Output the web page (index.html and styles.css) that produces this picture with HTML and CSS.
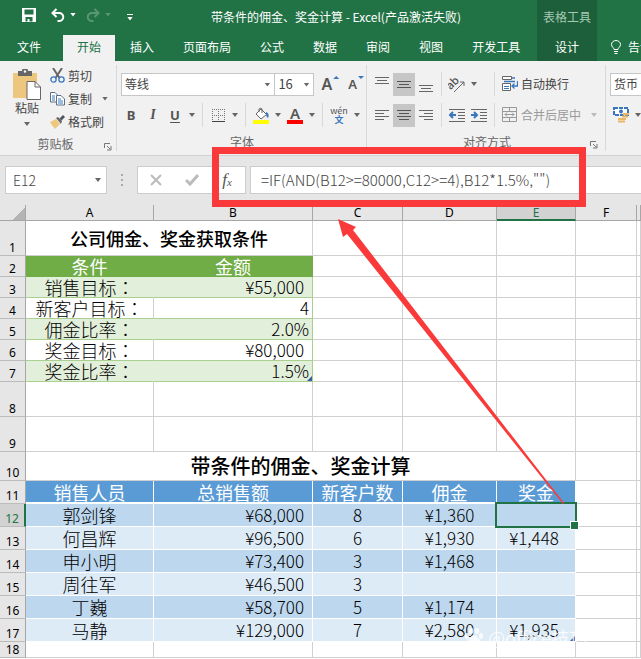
FILE: index.html
```html
<!DOCTYPE html>
<html lang="zh-Hans">
<head>
    <meta charset="UTF-8">
    <title>带条件的佣金、奖金计算 - Excel</title>
    <link rel="stylesheet" href="styles.css">
</head>
<body>
    <header>
        <div class="title-row">
            <div class="title-left">
                <div class="quick">
                    <button class="plain" aria-label="保存">
                        <svg width="14" height="14" viewBox="0 0 14 14"><path d="M0 0h14v14H0z" fill="#fff"/><path d="M2.500 1.500h9v5h-9zM3.500 9h7v4.500H7.500v-2.500h-2v2.500h-2z" fill="#217346"/></svg>
                    </button>
                    <button class="plain undo" aria-label="撤销">
                        <svg width="14" height="14" viewBox="0 0 14 14"><path d="M1.500 5h6.500a4 4 0 0 1 .500 8H6.500M5.500 1L1.500 5l4 4" fill="none" stroke="#fff" stroke-width="2"/></svg>
                        <i class="arrow"></i>
                    </button>
                    <button class="plain redo" aria-label="恢复">
                        <svg width="14" height="14" viewBox="0 0 14 14"><path d="M12.500 5H6a4 4 0 0 0-.500 8h2M8.500 1l4 4-4 4" fill="none" stroke="#fff" stroke-width="2"/></svg>
                        <i class="arrow"></i>
                    </button>
                    <button class="plain more" aria-label="自定义"><i class="bar"></i><i class="arrow"></i></button>
                </div>
                <div class="doc-title">带条件的佣金、奖金计算 - Excel(产品激活失败)</div>
            </div>
            <div class="tool-title">表格工具</div>
        </div>
        <div class="tab-row">
            <nav class="tabs">
                <button class="tab file">文件</button>
                <button class="tab active">开始</button>
                <button class="tab">插入</button>
                <button class="tab">页面布局</button>
                <button class="tab">公式</button>
                <button class="tab">数据</button>
                <button class="tab">审阅</button>
                <button class="tab">视图</button>
                <button class="tab">开发工具</button>
            </nav>
            <button class="tab design">设计</button>
            <button class="tab tell">
                <svg width="10" height="14" viewBox="0 0 10 14"><path d="M3 9.500C3 7.500.500 7 .500 4.500a4.500 4 0 0 1 9 0C9.500 7 7 7.500 7 9.500zM3 11.500h4M3.500 13.500h3" fill="none" stroke="#fff"/></svg>
                告诉我
            </button>
        </div>
    </header>

    <div class="ribbon">
        <section class="group clipboard">
            <div class="clip-body">
                <button class="plain paste">
                    <svg width="30" height="31" viewBox="0 0 30 31"><path d="M1 4h24v25H1z" fill="#eec77f"/><path d="M6 2h4a3 3 0 0 1 6 0h4v5H6z" fill="#666"/><circle cx="13" cy="2.500" r="1.200" fill="#fff"/><path d="M15 12.500h8l5.500 5.500v12.500H15z" fill="#fff" stroke="#666"/><path d="M23 12.500V18h5.500" fill="none" stroke="#666"/></svg>
                    <span>粘贴</span>
                    <i class="arrow"></i>
                </button>
                <div class="clip-list">
                    <button class="plain">
                        <svg width="15" height="15" viewBox="0 0 15 15"><path d="M3 0l6.500 10M12 0L5.500 10" stroke="#666" stroke-width="2" fill="none"/><circle cx="3.500" cy="11.500" r="2.600" fill="none" stroke="#3a76bd" stroke-width="1.300"/><circle cx="11.500" cy="11.500" r="2.600" fill="none" stroke="#3a76bd" stroke-width="1.300"/></svg>
                        剪切
                    </button>
                    <button class="plain">
                        <svg width="15" height="15" viewBox="0 0 15 15"><path d="M.500 1.500H5L7.500 4v7h-7z" fill="#fff" stroke="#5b6f86"/><path d="M2 5h3M2 7h3M2 9h3" stroke="#3a76bd"/><path d="M6.500 4.500H11L14.500 8v6h-8z" fill="#fff" stroke="#5b6f86"/><path d="M8 8h3M8 10h5M8 12h5" stroke="#3a76bd"/></svg>
                        复制
                        <i class="arrow copy-arrow"></i>
                    </button>
                    <button class="plain">
                        <svg width="15" height="15" viewBox="0 0 15 15"><path d="M0 8l6-3 4 5-5 5c-1-2-3-3-5-7z" fill="#eec77f"/><path d="M6 4l2-1 4 4-1 3z" fill="#666"/><path d="M9.500 4.500L13 1l2 2-3.500 3.500z" fill="#4d5663"/></svg>
                        格式刷
                    </button>
                </div>
            </div>
            <div class="group-label">剪贴板<svg class="launcher" width="8" height="8" viewBox="0 0 8 8"><path d="M.500 5V.500H6M3 3l3.500 3.500M7 3v4H3" fill="none" stroke="#777"/></svg></div>
        </section>

        <section class="group font">
            <div class="tool-row">
                <span class="combo family"><select aria-label="字体"><option>等线</option></select></span>
                <span class="combo size"><select aria-label="字号"><option>16</option></select></span>
                <button class="plain grow" aria-label="增大字号">A<i></i></button>
                <button class="plain shrink" aria-label="减小字号">A<i></i></button>
            </div>
            <div class="tool-row">
                <button class="tool bold">B</button>
                <button class="tool italic">I</button>
                <button class="tool underline">U</button>
                <i class="arrow"></i><i class="sep"></i>
                <button class="tool" aria-label="边框">
                    <svg width="13" height="13" viewBox="0 0 13 13"><path d="M0 .500h13M0 6.500h13M.500 0v12M6.500 0v12M12.500 0v12" stroke="#777" stroke-dasharray="1 1"/><path d="M0 12.500h13" stroke="#444"/></svg>
                </button>
                <i class="arrow"></i><i class="sep"></i>
                <button class="tool" aria-label="填充颜色">
                    <svg width="17" height="17" viewBox="0 0 17 17"><path d="M3 7l5-5 5.500 5.500L8 12z" fill="#fff" stroke="#666"/><path d="M6 5V2a2 2 0 0 1 3 0v4" fill="none" stroke="#666"/><path d="M13 5c3 1 3 4 2 6-2-1-2-3-2-6z" fill="#3a76bd"/><path d="M0 13h16v4H0z" fill="#ff0"/></svg>
                </button>
                <i class="arrow"></i>
                <button class="tool fore"><span>A</span></button>
                <i class="arrow"></i><i class="sep"></i>
                <button class="tool pinyin"><span>wén</span><b>文</b></button>
                <i class="arrow"></i>
            </div>
            <div class="group-label">字体</div>
        </section>

        <section class="group align">
            <div class="tool-row">
                <button class="tool" aria-label="顶端对齐"><svg width="14" height="16" viewBox="0 0 14 16"><path d="M0 1.500h14M2 4.500h10M0 7.500h14" stroke="#666"/></svg></button>
                <button class="tool on" aria-label="垂直居中"><svg width="14" height="16" viewBox="0 0 14 16"><path d="M0 5.500h14M2 8.500h10M0 11.500h14" stroke="#555"/></svg></button>
                <button class="tool" aria-label="底端对齐"><svg width="14" height="16" viewBox="0 0 14 16"><path d="M0 9.500h14M2 12.500h10M0 15.500h14" stroke="#666"/></svg></button>
                <i class="sep"></i>
                <div class="pair">
                    <button class="tool" aria-label="方向"><svg width="18" height="17" viewBox="0 0 18 17"><text class="ab" x="-1" y="10" transform="rotate(-45 6 8)">ab</text><path d="M6 16L16 6M12 6h4v4" fill="none" stroke="#666"/></svg></button>
                    <i class="arrow"></i>
                </div>
                <i class="sep"></i>
                <button class="plain wide"><svg width="16" height="16" viewBox="0 0 16 16"><path d="M.500 .500h9v3h-9zM.500 7.500h8v7h-8z" fill="#fff" stroke="#666"/><path d="M2 10.500h5M2 12.500h5" stroke="#3a76bd"/><path d="M10 2h3M2 5.500h11M15.500 5v5h-5M12.500 7.500l-2.500 2.500 2.500 2.500" fill="none" stroke="#3a76bd" stroke-width="1.300"/></svg>自动换行</button>
            </div>
            <div class="tool-row">
                <button class="tool" aria-label="左对齐"><svg width="14" height="12" viewBox="0 0 14 12"><path d="M0 1.500h14M0 4.500h9M0 7.500h14M0 10.500h9" stroke="#666"/></svg></button>
                <button class="tool on" aria-label="居中"><svg width="14" height="12" viewBox="0 0 14 12"><path d="M0 1.500h14M2 4.500h10M0 7.500h14M2 10.500h10" stroke="#555"/></svg></button>
                <button class="tool" aria-label="右对齐"><svg width="14" height="12" viewBox="0 0 14 12"><path d="M0 1.500h14M5 4.500h9M0 7.500h14M5 10.500h9" stroke="#666"/></svg></button>
                <i class="sep"></i>
                <div class="pair">
                    <button class="tool" aria-label="减少缩进"><svg width="16" height="14" viewBox="0 0 16 14"><path d="M0 1.500h16M9 4.500h7M9 7.500h7M9 10.500h7M0 13.500h16" stroke="#666"/><path d="M1 7h6M4 4L1 7l3 3" fill="none" stroke="#3a76bd" stroke-width="2"/></svg></button>
                    <button class="tool" aria-label="增加缩进"><svg width="16" height="14" viewBox="0 0 16 14"><path d="M0 1.500h16M9 4.500h7M9 7.500h7M9 10.500h7M0 13.500h16" stroke="#666"/><path d="M0 7h6M3 4l3 3-3 3" fill="none" stroke="#3a76bd" stroke-width="2"/></svg></button>
                </div>
                <i class="sep"></i>
                <button class="plain wide merge"><svg width="16" height="16" viewBox="0 0 16 16"><path d="M.500 .500h14v14H.500zM.500 4.500h14M.500 10.500h14M7.500 .500v4M7.500 10.500v4M3 7.500h9M5 5.500l-2 2 2 2M10 5.500l2 2-2 2" fill="none" stroke="#999"/></svg>合并后居中</button>
                <i class="arrow faint"></i>
            </div>
            <div class="group-label">对齐方式<svg class="launcher" width="8" height="8" viewBox="0 0 8 8"><path d="M.500 5V.500H6M3 3l3.500 3.500M7 3v4H3" fill="none" stroke="#777"/></svg></div>
        </section>

        <section class="group number">
            <div class="tool-row">
                <span class="combo format"><select aria-label="数字格式"><option>货币</option></select></span>
            </div>
            <div class="tool-row">
                <button class="tool" aria-label="会计格式"><svg width="17" height="16" viewBox="0 0 17 16"><path d="M1 1h14v7H1z" fill="#fff" stroke="#3a76bd" stroke-width="2" stroke-dasharray="4 1"/><circle cx="8" cy="4.500" r="2" fill="#3a76bd"/><path d="M10 7h6M9 9.500h6M5 12h8M5 14.500h7" stroke="#eab765" stroke-width="2"/></svg></button>
                <i class="arrow"></i>
            </div>
        </section>
    </div>

    <div class="formula-bar">
        <div class="name-box"><input type="text" value="E12" aria-label="名称框"><i class="arrow"></i></div>
        <div class="dots"><i></i><i></i><i></i></div>
        <div class="edit-buttons">
            <button class="plain" aria-label="取消"><svg width="12" height="12" viewBox="0 0 12 12"><path d="M1 1l10 10M11 1L1 11" stroke="#bbb" stroke-width="2"/></svg></button>
            <button class="plain" aria-label="输入"><svg width="14" height="12" viewBox="0 0 14 12"><path d="M1 6l4 4 8-9" fill="none" stroke="#bbb" stroke-width="3"/></svg></button>
            <button class="plain fx" aria-label="插入函数">f<small>x</small></button>
        </div>
        <input class="formula" type="text" aria-label="编辑栏" value='=IF(AND(B12&gt;=80000,C12&gt;=4),B12*1.5%,"")'>
    </div>

    <table class="sheet">
        <colgroup>
            <col class="col-head"><col class="col-a"><col class="col-b"><col class="col-c"><col class="col-d"><col class="col-e"><col class="col-f"><col>
        </colgroup>
        <thead>
            <tr><th class="corner"></th><th>A</th><th>B</th><th>C</th><th>D</th><th class="picked">E</th><th>F</th><th></th></tr>
        </thead>
        <tbody>
            <tr class="tall"><th>1</th><td colspan="2" class="title">公司佣金、奖金获取条件</td><td></td><td></td><td></td><td></td><td></td></tr>
            <tr class="green-head"><th>2</th><td>条件</td><td>金额</td><td></td><td></td><td></td><td></td><td></td></tr>
            <tr class="green band"><th>3</th><td>销售目标<span class="colon" lang="zh-Hant">：</span></td><td class="money">¥55,000</td><td></td><td></td><td></td><td></td><td></td></tr>
            <tr class="green"><th>4</th><td>新客户目标<span class="colon" lang="zh-Hant">：</span></td><td class="value">4</td><td></td><td></td><td></td><td></td><td></td></tr>
            <tr class="green band"><th>5</th><td>佣金比率<span class="colon" lang="zh-Hant">：</span></td><td class="value">2.0%</td><td></td><td></td><td></td><td></td><td></td></tr>
            <tr class="green"><th>6</th><td>奖金目标<span class="colon" lang="zh-Hant">：</span></td><td class="money">¥80,000</td><td></td><td></td><td></td><td></td><td></td></tr>
            <tr class="green band"><th>7</th><td>奖金比率<span class="colon" lang="zh-Hant">：</span></td><td class="value table-end">1.5%</td><td></td><td></td><td></td><td></td><td></td></tr>
            <tr class="tall"><th>8</th><td></td><td></td><td></td><td></td><td></td><td></td><td></td></tr>
            <tr class="tall"><th>9</th><td></td><td></td><td></td><td></td><td></td><td></td><td></td></tr>
            <tr class="caption"><th>10</th><td colspan="5" class="title">带条件的佣金、奖金计算</td><td></td><td></td></tr>
            <tr class="blue-head"><th>11</th><td>销售人员</td><td>总销售额</td><td>新客户数</td><td>佣金</td><td>奖金</td><td></td><td></td></tr>
            <tr class="blue dark"><th class="picked">12</th><td>郭剑锋</td><td class="money">¥68,000</td><td class="num">8</td><td class="num">¥1,360</td><td class="selected"></td><td></td><td></td></tr>
            <tr class="blue"><th>13</th><td>何昌辉</td><td class="money">¥96,500</td><td class="num">6</td><td class="num">¥1,930</td><td class="num bonus">¥1,448</td><td></td><td></td></tr>
            <tr class="blue dark"><th>14</th><td>申小明</td><td class="money">¥73,400</td><td class="num">3</td><td class="num">¥1,468</td><td></td><td></td><td></td></tr>
            <tr class="blue"><th>15</th><td>周往军</td><td class="money">¥46,500</td><td class="num">3</td><td></td><td></td><td></td><td></td></tr>
            <tr class="blue dark"><th>16</th><td>丁巍</td><td class="money">¥58,700</td><td class="num">5</td><td class="num">¥1,174</td><td></td><td></td><td></td></tr>
            <tr class="blue"><th>17</th><td>马静</td><td class="money">¥129,000</td><td class="num">7</td><td class="num">¥2,580</td><td class="num bonus table-end">¥1,935</td><td></td><td></td></tr>
            <tr class="last"><th>18</th><td></td><td></td><td></td><td></td><td></td><td></td><td></td></tr>
        </tbody>
    </table>

    <!-- annotations over the sheet -->
    <div class="red-box"></div>
    <svg class="red-arrow" width="228" height="286" viewBox="0 0 228 286"><path d="M0 0l18 8-3 3L226 284l-1 1L9 15l-4 3z" fill="#fa3a3a"/></svg>
    <div class="watermark">
        <svg width="20" height="20" viewBox="0 0 20 20" fill="#fff"><ellipse cx="3" cy="9" rx="2.200" ry="3"/><ellipse cx="7.500" cy="4" rx="2.200" ry="3"/><ellipse cx="13" cy="4" rx="2.200" ry="3"/><ellipse cx="17" cy="9" rx="2.200" ry="3"/><path d="M10 8c3 0 4 3 6 5s1 6-2 6-3-1-4-1-2 1-4 1-4-4-2-6 3-5 6-5z"/></svg>
        <span>@office技巧</span>
    </div>
</body>
</html>
```

FILE: styles.css
```css
* {
    box-sizing: border-box;
}

body {
    position: relative;
    margin: 0;
    overflow: hidden;
    background: #fff;
    color: #444;
    font-family: "Noto Sans CJK SC", sans-serif;
    font-size: 12px;
    line-height: 16px;
}

button, input, select {
    margin: 0;
    padding: 0;
    border: 0;
    background: none;
    color: inherit;
    font: inherit;
}

.plain {
    display: flex;
    align-items: center;
    white-space: nowrap;
}

.arrow {
    flex: none;
    width: 12px;
    height: 4px;
    background: #666;
    clip-path: polygon(3px 0, 9px 0, 6px 4px);
}

.arrow.faint {
    margin-left: 7px;
    background: #bbb;
}

/* header */
header {
    background: #217346;
    color: #fff;
}

.title-row, .tab-row {
    display: grid;
    grid-template-columns: 537px 60px 1fr;
}

.title-row {
    height: 35px;
}

.title-left {
    display: flex;
    align-items: center;
}

.doc-title {
    padding-bottom: 2px;
}

.quick {
    display: flex;
    align-items: center;
    width: 211px;
    padding: 0 0 6px 22px;
}

.quick .arrow {
    margin-left: 2px;
    background: #fff;
}

.undo {
    margin-left: 15px;
}

.redo {
    margin-left: 7px;
    opacity: 0.25;
}

.more {
    flex-direction: column;
    gap: 2px;
    margin: 5px 0 0 10px;
}

.bar {
    width: 6px;
    height: 1px;
    background: #fff;
}

.quick .more .arrow {
    margin: 0;
}

.tool-title {
    padding-top: 9px;
    background: #1c5f3a;
    color: #a5c9b3;
    text-align: center;
}

.tabs {
    display: flex;
    gap: 1px;
}

.tab {
    height: 26px;
    padding: 0 14px 2px;
    color: #fff;
    white-space: nowrap;
}

.tab.file {
    padding: 0 21px 2px 17px;
}

.tab.active {
    background: #f1f1f1;
    color: #217346;
}

.tab.design {
    padding: 0 0 2px;
    background: #1c5f3a;
}

.tab.tell {
    display: flex;
    align-items: center;
    gap: 7px;
    overflow: hidden;
}

.tab.tell svg {
    flex: none;
}

/* ribbon */
.ribbon {
    display: flex;
    height: 95px;
    border-bottom: 1px solid #d2d2d2;
    background: #f1f1f1;
}

.group {
    position: relative;
    flex: none;
    padding: 11px 3px 0;
}

.group::after {
    content: "";
    position: absolute;
    top: 4px;
    right: 0;
    width: 1px;
    height: 86px;
    background: #d8d8d8;
}

.group.number::after {
    display: none;
}

.clipboard {
    width: 117px;
    padding: 3px 0 0 12px;
}

.font {
    width: 250px;
}

.align {
    width: 239px;
    padding-left: 4px;
}

.number {
    flex: 1;
    overflow: hidden;
    padding-left: 4px;
}

.clip-body {
    display: flex;
    gap: 8px;
    height: 70px;
}

.paste {
    flex-direction: column;
    width: 30px;
    padding-top: 5px;
}

.paste .arrow {
    margin-top: 6px;
}

.clip-list .plain {
    gap: 3px;
    height: 23px;
}

.copy-arrow {
    margin-left: 4px;
}

.group-label {
    position: relative;
    margin-top: 2px;
    color: #666;
    text-align: center;
}

.clipboard .group-label {
    padding-right: 18px;
}

.launcher {
    position: absolute;
    right: 5px;
    top: 7px;
}

.tool-row {
    display: flex;
    align-items: center;
    height: 24px;
    margin-bottom: 7px;
}

.tool-row + .group-label {
    margin-top: 0;
}

.tool {
    display: flex;
    flex: none;
    align-items: center;
    justify-content: center;
    width: 22px;
    height: 23px;
    color: #555;
}

.tool.on {
    background: #c6c6c6;
}

.sep {
    flex: none;
    width: 1px;
    height: 24px;
    margin: 0 4px;
    background: #d8d8d8;
}

.combo {
    position: relative;
    height: 23px;
    border: 1px solid #c6c6c6;
    background: #fff;
}

.combo::after {
    content: "";
    position: absolute;
    top: 9px;
    right: 4px;
    width: 6px;
    height: 4px;
    background: #666;
    clip-path: polygon(0 0, 6px 0, 3px 4px);
}

.combo select {
    appearance: none;
    width: 100%;
    height: 21px;
    padding-left: 3px;
}

.family {
    width: 158px;
    margin-left: 1px;
}

.size {
    width: 40px;
    border-left: 0;
}

.size select {
    font-size: 13px;
}

.format {
    flex: none;
    width: 90px;
}

.grow, .shrink {
    gap: 1px;
    margin-left: 7px;
    color: #555;
    font-family: "Noto Sans", sans-serif;
    font-size: 16px;
    font-weight: 600;
}

.shrink {
    margin-left: 9px;
    font-size: 13px;
}

.grow i, .shrink i {
    width: 6px;
    height: 3px;
    margin-bottom: 13px;
    background: #3a76bd;
    clip-path: polygon(0 3px, 3px 0, 6px 3px);
}

.shrink i {
    clip-path: polygon(0 0, 3px 3px, 6px 0);
}

.bold, .italic, .underline {
    font-family: "Noto Sans", sans-serif;
    font-size: 13px;
    font-weight: bold;
}

.italic {
    font-family: "Liberation Serif", serif;
    font-size: 14px;
    font-style: italic;
}

.underline {
    text-decoration: underline;
    text-underline-offset: 2px;
}

.fore span {
    width: 16px;
    height: 17px;
    border-bottom: 4px solid #f00;
    font-family: "Noto Sans", sans-serif;
    font-size: 15px;
    font-weight: 600;
    line-height: 12px;
}

.pinyin {
    flex-direction: column;
    width: 24px;
    font-size: 9px;
    line-height: 9px;
}

.pinyin b {
    color: #3a76bd;
}

.pair {
    display: flex;
    align-items: center;
    width: 44px;
}

.ab {
    fill: #555;
    font-size: 11px;
    font-weight: 500;
}

.wide {
    gap: 3px;
    padding-left: 3px;
}

.merge {
    color: #999;
}

/* formula bar */
.formula-bar {
    display: flex;
    height: 49px;
    padding: 10px 0 11px 5px;
    background: #e6e6e6;
}

.name-box {
    display: flex;
    align-items: center;
    width: 102px;
    padding: 0 2px 0 7px;
    border: 1px solid #ccc;
    background: #fff;
}

.name-box input {
    flex: 1;
    min-width: 0;
    font-size: 14px;
    font-weight: 300;
}

.dots {
    display: flex;
    flex-direction: column;
    align-items: center;
    justify-content: center;
    gap: 3px;
    width: 30px;
}

.dots i {
    width: 2px;
    height: 2px;
    background: #aaa;
}

.edit-buttons {
    display: flex;
    width: 109px;
    border: 1px solid #ccc;
    background: #fff;
}

.edit-buttons .plain {
    flex: 1;
    justify-content: center;
}

.fx {
    color: #555;
    font-family: "Liberation Serif", serif;
    font-size: 17px;
    font-style: italic;
}

.fx small {
    padding-top: 4px;
    font-size: 11px;
}

.formula {
    flex: 1;
    min-width: 0;
    margin-left: 4px;
    padding-left: 10px;
    border: 1px solid #ccc;
    border-right: 0;
    background: #fff;
    font-size: 15px;
    font-weight: 300;
}

/* sheet */
.sheet {
    width: 100%;
    table-layout: fixed;
    border-collapse: separate;
    border-spacing: 0;
    color: #000;
}

.col-head { width: 26px; }
.col-a { width: 128px; }
.col-b { width: 159px; }
.col-c { width: 90px; }
.col-d { width: 94px; }
.col-e { width: 79px; }
.col-f { width: 61px; }

.sheet th {
    padding: 0;
    border-right: 1px solid #a6a6a6;
    border-bottom: 1px solid #bbb;
    background: #e6e6e6;
    font-family: "Noto Sans", sans-serif;
    font-size: 12px;
    font-weight: normal;
    line-height: 14px;
    vertical-align: bottom;
}

.sheet thead th {
    height: 16px;
    border-bottom-color: #a6a6a6;
}

.sheet thead .corner {
    background: linear-gradient(135deg, #e6e6e6 70%, #b4b4b4 70%);
}

.sheet thead .picked {
    border-bottom: 2px solid #217346;
    background: #d2d2d2;
    color: #217346;
    line-height: 13px;
}

.sheet tbody .picked {
    border-right: 2px solid #217346;
    background: #d2d2d2;
    color: #217346;
}

.sheet td {
    height: 21px;
    padding: 0;
    border-right: 1px solid #d0d0d0;
    border-bottom: 1px solid #d0d0d0;
    font-size: 18px;
    font-weight: 300;
    line-height: 20px;
    text-align: center;
    white-space: nowrap;
}

.sheet .tall td {
    height: 35px;
}

.sheet .caption td {
    height: 29px;
    font-size: 20px;
    line-height: 24px;
}

.sheet .title {
    font-size: 18px;
    font-weight: 500;
}

.sheet .blue-head td, .sheet .blue td {
    height: 23px;
}

.sheet .last td {
    height: 16px;
}

.sheet .money, .sheet .value, .sheet .num {
    font-size: 17px;
}

.sheet .money {
    padding-right: 8px;
    text-align: right;
}

.sheet .value {
    padding-right: 3px;
    text-align: right;
}

.sheet .bonus {
    padding-right: 4px;
}

.colon {
    font-family: "Noto Sans CJK TC", sans-serif;
}

.green-head td:nth-child(-n+3) {
    border-color: #70ad47;
    background: #70ad47;
    color: #fff;
    font-weight: 400;
}

.green td:nth-child(-n+3) {
    border-bottom-color: #a9d08e;
}

.green td:nth-child(3) {
    border-right-color: #a9d08e;
}

.green.band td:nth-child(-n+3) {
    background: #e2efda;
}

.green.band td:nth-child(2) {
    border-right-color: #e2efda;
}

.blue-head td:nth-child(-n+6) {
    border-color: #fff;
    border-bottom-width: 2px;
    background: #5b9bd5;
    color: #fff;
    font-weight: 400;
}

.blue td:nth-child(-n+6) {
    border-color: #fff;
    background: #ddebf7;
}

.blue.dark td:nth-child(-n+6) {
    background: #bdd7ee;
}

.table-end {
    position: relative;
}

.table-end::after {
    content: "";
    position: absolute;
    right: 0;
    bottom: 0;
    width: 5px;
    height: 5px;
    background: #3a5ba0;
    clip-path: polygon(100% 0, 100% 100%, 0 100%);
}

.selected {
    position: relative;
}

.selected::before {
    content: "";
    position: absolute;
    inset: -2px;
    border: 2px solid #217346;
}

.selected::after {
    content: "";
    position: absolute;
    right: -4px;
    bottom: -4px;
    width: 7px;
    height: 7px;
    border: 1px solid #fff;
    background: #217346;
}

/* annotations */
.red-box {
    position: absolute;
    top: 147px;
    left: 212px;
    width: 374px;
    height: 60px;
    border: 7px solid #fa3a3a;
}

.red-arrow {
    position: absolute;
    top: 219px;
    left: 338px;
}

.watermark {
    position: absolute;
    top: 626px;
    left: 464px;
    display: flex;
    align-items: center;
    gap: 4px;
    color: #fff;
    font-size: 18px;
    line-height: 22px;
    opacity: 0.8;
}
```
